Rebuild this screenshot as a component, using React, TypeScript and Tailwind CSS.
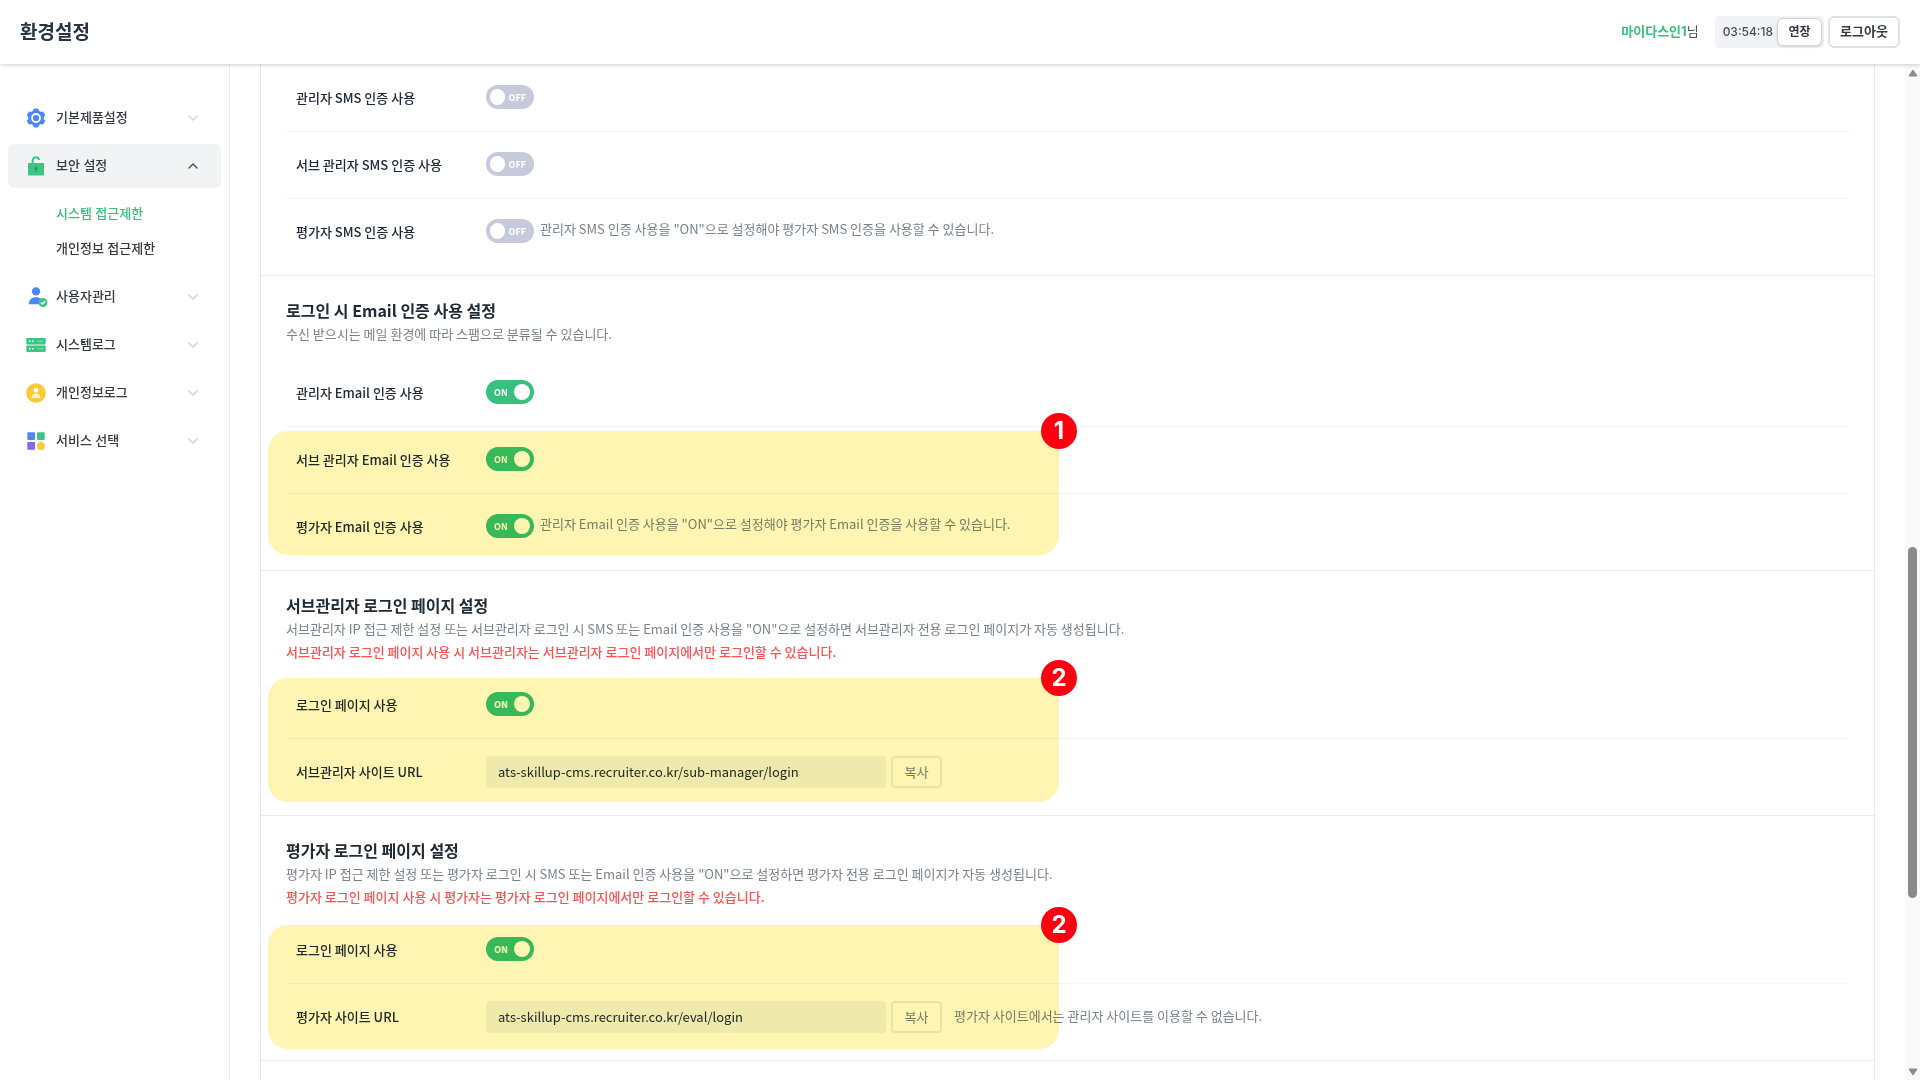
import React, { useState } from 'react';
import { ChevronDown, ChevronUp } from 'lucide-react';

const GearIcon = () => (
  <svg width="20" height="20" viewBox="0 0 20 20" fill="none">
    <g fill="#4f86f7">
      <circle cx="10" cy="10" r="7.8" />
      <rect x="7.2" y="0.5" width="5.6" height="19" rx="1.8" />
      <rect x="7.2" y="0.5" width="5.6" height="19" rx="1.8" transform="rotate(60 10 10)" />
      <rect x="7.2" y="0.5" width="5.6" height="19" rx="1.8" transform="rotate(120 10 10)" />
    </g>
    <circle cx="10" cy="10" r="4" stroke="#fff" strokeWidth="1.8" />
  </svg>
);

const LockIcon = () => (
  <svg width="20" height="20" viewBox="0 0 20 20" fill="none">
    <path d="M6.700 8V4.600C6.700 2.400 8 1.300 9.900 1.300c1.700 0 2.900.900 3.300 2.600" stroke="#3ec584" strokeWidth="2" />
    <rect x="2" y="7" width="16" height="12.500" rx="0.800" fill="#3ec584" />
    <path d="M10 10.800a1.500 1.500 0 0 0-.7 2.800V16h1.400v-2.400a1.500 1.500 0 0 0-.7-2.800z" fill="#2a9160" />
  </svg>
);

const UserIcon = () => (
  <svg width="22" height="20" viewBox="0 0 22 20" fill="none" className="-mr-0.5">
    <circle cx="10" cy="4.400" r="4.200" fill="#4f86f7" />
    <path d="M2.800 17.200c0-4.400 3-7 7.200-7s7.200 2.600 7.200 7z" fill="#4f86f7" />
    <circle cx="17" cy="15.500" r="4.500" fill="#3ec584" />
    <path d="M14.900 15.500l1.600 1.600 2.800-2.900" stroke="#fff" strokeWidth="1.400" />
  </svg>
);

const ServerIcon = () => (
  <svg width="20" height="20" viewBox="0 0 20 20" fill="none">
    <rect x="0.300" y="3" width="19.400" height="6.600" rx="0.800" fill="#3ec584" />
    <rect x="0.300" y="10.400" width="19.400" height="6.600" rx="0.800" fill="#3ec584" />
    <path d="M1 10h18" stroke="#8adbb4" strokeWidth="1" />
    <path d="M3 6.300h1.500M6 6.300h1.500M3 13.700h1.500M6 13.700h1.500" stroke="#fff" strokeWidth="1.600" />
    <path d="M11.500 6.300H17M11.500 13.700H17" stroke="#8adbb4" strokeWidth="1" />
  </svg>
);

const ProfileIcon = () => (
  <svg width="20" height="20" viewBox="0 0 20 20" fill="none">
    <circle cx="10" cy="10" r="9.800" fill="#fac938" />
    <circle cx="10" cy="7.300" r="2.400" fill="#fff" />
    <path d="M5.600 14.900c0-2.800 1.700-4.400 4.400-4.400s4.400 1.600 4.400 4.400z" fill="#fff3c9" />
  </svg>
);

const ServiceIcon = () => (
  <svg width="20" height="20" viewBox="0 0 20 20" fill="none">
    <rect x="1.300" y="1.200" width="7.700" height="7.700" rx="0.800" fill="#4f86f7" />
    <rect x="11" y="1.200" width="7.700" height="7.700" rx="0.800" fill="#3ec584" />
    <rect x="1.300" y="11" width="7.700" height="7.700" rx="0.800" fill="#8266f0" />
    <circle cx="14.900" cy="14.900" r="3.900" fill="#fac938" />
  </svg>
);

interface MenuItem {
  label: string;
  icon: React.ReactNode;
  children?: string[];
}

const MENU: MenuItem[] = [
  { label: '기본제품설정', icon: <GearIcon /> },
  { label: '보안 설정', icon: <LockIcon />, children: ['시스템 접근제한', '개인정보 접근제한'] },
  { label: '사용자관리', icon: <UserIcon /> },
  { label: '시스템로그', icon: <ServerIcon /> },
  { label: '개인정보로그', icon: <ProfileIcon /> },
  { label: '서비스 선택', icon: <ServiceIcon /> },
];

const Header = () => (
  <header className="relative z-10 flex h-16 shrink-0 items-center justify-between bg-white px-5 shadow-[0_1px_4px_rgba(0,0,0,0.2)]">
    <h1 className="pt-0.5 text-[19px] font-bold text-[#2b3442]">환경설정</h1>
    <div className="flex items-center gap-1">
      <p className="mr-3 text-[13px] text-[#495057]">
        <strong className="font-bold text-[#38c17e]">마이다스인1</strong>님
      </p>
      <div className="flex h-8 items-center gap-1 rounded bg-[#f1f3f5] pr-0.5 pl-2">
        <time className="text-xs font-medium text-[#495057]">03:54:18</time>
        <button className="h-7 w-[45px] rounded-md border border-[#ced4da] bg-white text-xs font-bold text-[#343a40] shadow-sm">
          연장
        </button>
      </div>
      <button className="h-8 w-[72px] rounded-md border-2 border-[#dee2e6] bg-white text-[13px] font-bold text-[#343a40]">
        로그아웃
      </button>
    </div>
  </header>
);

const Sidebar = () => (
  <nav className="flex w-[230px] shrink-0 flex-col gap-1 border-r border-[#e9ecef] px-2 pt-8 text-[13px] font-medium text-[#343a40]">
    {MENU.map((item) => {
      const open = !!item.children;
      return (
        <React.Fragment key={item.label}>
          <button
            aria-expanded={open}
            className={`flex h-11 w-full shrink-0 items-center gap-2.5 rounded-md pr-5 pl-[18px] ${open ? 'bg-[#f1f3f5]' : ''}`}
          >
            {item.icon}
            <span className="flex-1 text-left">{item.label}</span>
            {open ? <ChevronUp size={16} className="text-[#495057]" /> : <ChevronDown size={16} className="text-[#ced4da]" />}
          </button>
          {item.children && (
            <ul className="pt-1 pb-[5px] pl-12">
              {item.children.map((child, idx) => (
                <li key={child}>
                  <a href="#" className={`block leading-[35px] ${idx === 0 ? 'text-[#38c17e]' : ''}`}>{child}</a>
                </li>
              ))}
            </ul>
          )}
        </React.Fragment>
      );
    })}
  </nav>
);

const Toggle = ({ id, defaultOn }: { id: string; defaultOn: boolean }) => {
  const [on, setOn] = useState(defaultOn);
  return (
    <label
      className={`relative mb-0.5 flex h-6 w-12 shrink-0 cursor-pointer items-center justify-between rounded-full px-1 text-[9px] leading-none font-bold text-white ${
        on ? 'flex-row-reverse bg-[#38c17e]' : 'bg-[#c7cada]'
      }`}
    >
      <input id={id} type="checkbox" className="sr-only" checked={on} onChange={() => setOn(!on)} />
      <span className="size-4 rounded-full bg-white" />
      <span className="px-1">{on ? 'ON' : 'OFF'}</span>
    </label>
  );
};

interface RowProps {
  id: string;
  label: string;
  children: React.ReactNode;
}

const Row = ({ id, label, children }: RowProps) => (
  <div className="flex h-[66px] items-center pl-2.5">
    <label htmlFor={id} className="w-[190px] shrink-0 font-medium text-[#212b36]">{label}</label>
    {children}
  </div>
);

const ToggleRow = ({ id, label, on, note }: { id: string; label: string; on: boolean; note?: string }) => (
  <Row id={id} label={label}>
    <Toggle id={id} defaultOn={on} />
    {note && <p className="pb-1.5 pl-1.5">{note}</p>}
  </Row>
);

const UrlRow = ({ id, label, url, note }: { id: string; label: string; url: string; note?: string }) => (
  <Row id={id} label={label}>
    <input id={id} readOnly value={url} className="h-8 w-[400px] rounded bg-[#f1f3f5] px-3 pb-0.5 text-[13px] text-[#212b36]" />
    <button className="ml-[5px] h-8 w-[51px] rounded border-2 border-[#e9ecef] bg-white">복사</button>
    {note && <p className="pb-0.5 pl-3">{note}</p>}
  </Row>
);

const Divider = () => <hr className="border-[#f1f3f5]" />;

const Section = ({ children }: { children: React.ReactNode }) => (
  <section className="border-b border-[#e6e9f2] px-[25px] pb-2.5">{children}</section>
);

const SectionHead = ({ title, desc, warning }: { title: string; desc: string; warning?: string }) => (
  <div className={`pt-[22px] ${warning ? 'pb-[9px]' : 'pb-3.5'}`}>
    <h2 className="text-base leading-6 font-bold text-[#212b36]">{title}</h2>
    <p className="leading-6">{desc}</p>
    {warning && <p className="leading-[22px] font-medium text-[#fa5252]">{warning}</p>}
  </div>
);

// Marker laid over a pair of rows, with its step number on the corner
const Callout = ({ step, className }: { step: number; className: string }) => (
  <>
    <div className={`pointer-events-none absolute -left-[18px] h-[124px] w-[791px] rounded-[20px] bg-[#fef5b3] mix-blend-multiply ${className}`} />
    <div className={`pointer-events-none absolute left-[755px] -mt-[18px] flex size-9 items-center justify-center rounded-full bg-[#ff0010] font-[Inter] text-2xl font-bold text-white ${className}`}>
      {step}
    </div>
  </>
);

const Scrollbar = () => (
  <div className="flex w-[15px] shrink-0 flex-col items-center bg-[#fafafa] pt-[5px] pb-1" aria-hidden="true">
    <svg width="10" height="8" viewBox="0 0 10 8"><path d="M5 1L9 7H1z" fill="#8b8b8b" stroke="#8b8b8b" strokeLinejoin="round" /></svg>
    <div className="grow-[470]" />
    <div className="w-[9px] grow-[351] rounded-full bg-[#8b8b8b]" />
    <div className="grow-[170]" />
    <svg width="10" height="8" viewBox="0 0 10 8"><path d="M5 7L9 1H1z" fill="#8b8b8b" stroke="#8b8b8b" strokeLinejoin="round" /></svg>
  </div>
);

const App: React.FC = () => {
  return (
    <div className="flex h-screen flex-col overflow-hidden bg-white font-[Inter,'Noto_Sans_CJK_KR',sans-serif]">
      <Header />
      <div className="flex min-h-0 flex-1">
        <Sidebar />
        <main className="min-w-0 flex-1 overflow-hidden px-[30px] font-['Noto_Sans_CJK_KR',sans-serif] text-[13px] text-[#78828c]">
          <div className="min-h-full border-x border-[#e6e9f2] pt-px">
            {/* SMS */}
            <Section>
              <ToggleRow id="sms-admin" label="관리자 SMS 인증 사용" on={false} />
              <Divider />
              <ToggleRow id="sms-sub" label="서브 관리자 SMS 인증 사용" on={false} />
              <Divider />
              <ToggleRow
                id="sms-eval"
                label="평가자 SMS 인증 사용"
                on={false}
                note={'관리자 SMS 인증 사용을 "ON"으로 설정해야 평가자 SMS 인증을 사용할 수 있습니다.'}
              />
            </Section>

            {/* Email */}
            <Section>
              <SectionHead title="로그인 시 Email 인증 사용 설정" desc="수신 받으시는 메일 환경에 따라 스팸으로 분류될 수 있습니다." />
              <ToggleRow id="email-admin" label="관리자 Email 인증 사용" on />
              <Divider />
              <div className="relative">
                <ToggleRow id="email-sub" label="서브 관리자 Email 인증 사용" on />
                <Divider />
                <ToggleRow
                  id="email-eval"
                  label="평가자 Email 인증 사용"
                  on
                  note={'관리자 Email 인증 사용을 "ON"으로 설정해야 평가자 Email 인증을 사용할 수 있습니다.'}
                />
                <Callout step={1} className="top-1" />
              </div>
            </Section>

            {/* Sub manager login page */}
            <Section>
              <SectionHead
                title="서브관리자 로그인 페이지 설정"
                desc={'서브관리자 IP 접근 제한 설정 또는 서브관리자 로그인 시 SMS 또는 Email 인증 사용을 "ON"으로 설정하면 서브관리자 전용 로그인 페이지가 자동 생성됩니다.'}
                warning="서브관리자 로그인 페이지 사용 시 서브관리자는 서브관리자 로그인 페이지에서만 로그인할 수 있습니다."
              />
              <div className="relative">
                <ToggleRow id="sub-page" label="로그인 페이지 사용" on />
                <Divider />
                <UrlRow id="sub-url" label="서브관리자 사이트 URL" url="ats-skillup-cms.recruiter.co.kr/sub-manager/login" />
                <Callout step={2} className="top-1.5" />
              </div>
            </Section>

            {/* Evaluator login page */}
            <Section>
              <SectionHead
                title="평가자 로그인 페이지 설정"
                desc={'평가자 IP 접근 제한 설정 또는 평가자 로그인 시 SMS 또는 Email 인증 사용을 "ON"으로 설정하면 평가자 전용 로그인 페이지가 자동 생성됩니다.'}
                warning="평가자 로그인 페이지 사용 시 평가자는 평가자 로그인 페이지에서만 로그인할 수 있습니다."
              />
              <div className="relative">
                <ToggleRow id="eval-page" label="로그인 페이지 사용" on />
                <Divider />
                <UrlRow
                  id="eval-url"
                  label="평가자 사이트 URL"
                  url="ats-skillup-cms.recruiter.co.kr/eval/login"
                  note="평가자 사이트에서는 관리자 사이트를 이용할 수 없습니다."
                />
                <Callout step={2} className="top-2" />
              </div>
            </Section>
          </div>
        </main>
        <Scrollbar />
      </div>
    </div>
  );
};

export default App;
